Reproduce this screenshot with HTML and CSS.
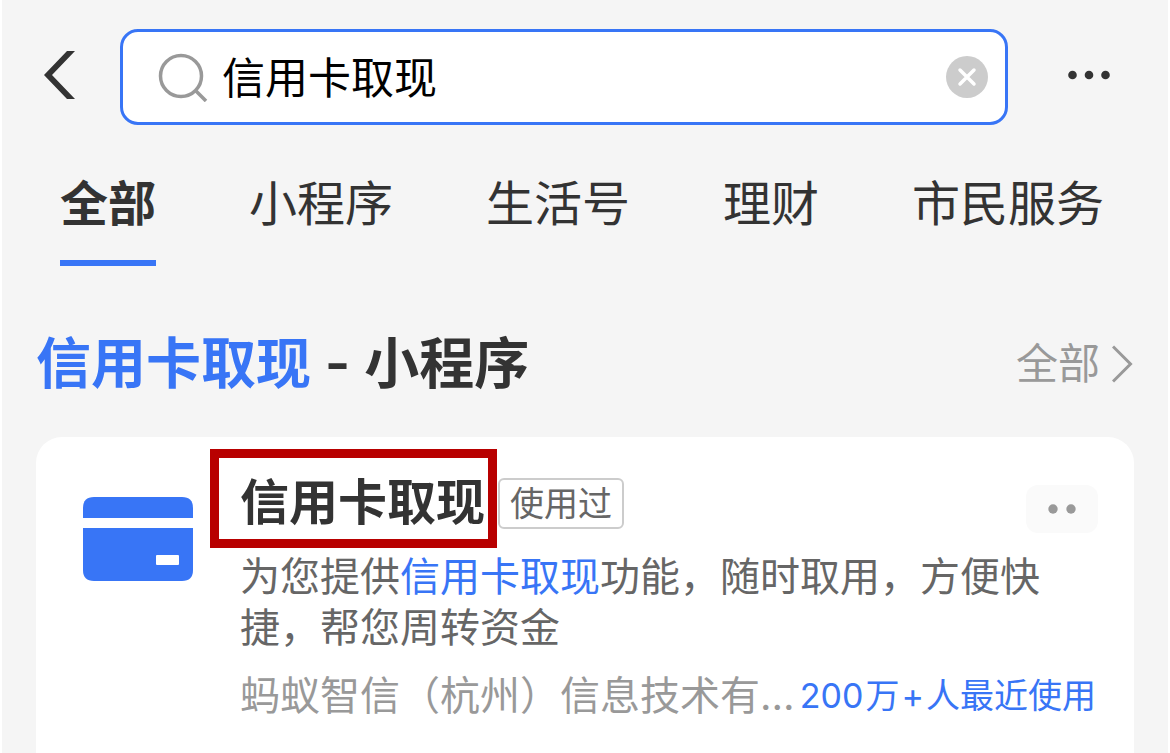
FILE: index.html
```
<!DOCTYPE html>
<html lang="zh-CN">
<head>
  <meta charset="UTF-8">
  <meta name="viewport" content="width=device-width, initial-scale=1.0">
  <title>信用卡取现 - 搜索</title>
  <link rel="stylesheet" href="styles.css">
</head>
<body>
  <!-- 顶部搜索栏 -->
  <header class="topbar">
    <button type="button" class="icon-btn nav-btn" aria-label="返回">
      <svg width="32" height="48" viewBox="0 0 32 48"><path d="M23 0h8L8 24l23 24h-8L0 24z" fill="#333"/></svg>
    </button>
    <form class="search-box">
      <svg width="50" height="50" viewBox="0 0 50 50" fill="none" stroke="#999" stroke-width="3.5"><circle cx="23" cy="24" r="20.5"/><path d="M37 38l11 11"/></svg>
      <input type="text" class="search-input" value="信用卡取现" aria-label="搜索">
      <button type="reset" class="icon-btn" aria-label="清除">
        <svg width="42" height="42" viewBox="0 0 42 42"><circle cx="21" cy="21" r="21" fill="#ccc"/><path d="M14 14l14 14M28 14L14 28" stroke="#fff" stroke-width="3.5" stroke-linecap="round"/></svg>
      </button>
    </form>
    <button type="button" class="icon-btn nav-btn" aria-label="更多">
      <svg width="42" height="10" viewBox="0 0 42 10" fill="#333"><circle cx="4.5" cy="5" r="4.3"/><circle cx="21" cy="5" r="4.3"/><circle cx="37.5" cy="5" r="4.3"/></svg>
    </button>
  </header>

  <!-- 分类标签 -->
  <nav class="tabs">
    <a href="#" class="tab active">全部</a>
    <a href="#" class="tab">小程序</a>
    <a href="#" class="tab">生活号</a>
    <a href="#" class="tab">理财</a>
    <a href="#" class="tab">市民服务</a>
  </nav>

  <main>
    <div class="section-header">
      <h1><span class="keyword">信用卡取现</span> - 小程序</h1>
      <a href="#" class="all-link">全部
        <svg width="22" height="38" viewBox="0 0 22 38" fill="none" stroke="#999" stroke-width="3"><path d="M1 1.5L18.5 19 1 36.5"/></svg>
      </a>
    </div>

    <!-- 搜索结果 -->
    <article class="card">
      <svg class="card-icon" width="110" height="84" viewBox="0 0 110 84">
        <path d="M0 21V11Q0 0 11 0h88q11 0 11 11v10z" fill="#3875f6"/>
        <path d="M0 31h110v42q0 11-11 11H11Q0 84 0 73z" fill="#3875f6"/>
        <rect x="73" y="58" width="23" height="10" rx="1" fill="#fff"/>
      </svg>
      <div class="card-body">
        <div class="card-head">
          <h2 class="card-title">信用卡取现</h2>
          <span class="badge">使用过</span>
          <button type="button" class="card-more" aria-label="更多操作">
            <svg width="28" height="10" viewBox="0 0 28 10" fill="#999"><circle cx="5" cy="5" r="4.7"/><circle cx="23" cy="5" r="4.7"/></svg>
          </button>
        </div>
        <p class="desc">为您提供<span class="keyword">信用卡取现</span>功能，随时取用，方便快捷，帮您周转资金</p>
        <div class="meta">
          <span class="company">蚂蚁智信（杭州）信息技术有限公司</span>
          <span class="usage"><span>200</span><span>万</span><span>+</span><span>人最近使用</span></span>
        </div>
      </div>
    </article>
  </main>
</body>
</html>
```
FILE: styles.css
```
* {
  box-sizing: border-box;
}
body {
  margin: 0;
  min-height: 100vh;
  background-color: #f5f5f5;
  border: solid #fff;
  border-width: 0 2px;
  font-family: Inter, "Noto Sans CJK SC", sans-serif;
  color: #333;
}
h1,
h2,
p {
  margin: 0;
}
a {
  color: inherit;
  text-decoration: none;
}
svg {
  display: block;
  flex-shrink: 0;
}
.icon-btn {
  padding: 0;
  border: none;
  background: none;
  cursor: pointer;
}
.nav-btn {
  padding-bottom: 4px;
}
.keyword {
  color: #3875f6;
}

/* 搜索栏 */
.topbar {
  display: flex;
  align-items: center;
  padding: 29px 58px 0 42px;
}
.search-box {
  flex: 1;
  display: flex;
  align-items: center;
  height: 96px;
  margin: 0 60px 0 44px;
  padding: 0 17px 0 35px;
  background-color: #fff;
  border: 3px solid #3875f6;
  border-radius: 18px;
}
.search-input {
  flex: 1;
  min-width: 0;
  height: 68px;
  padding: 0 14px 4px;
  border: none;
  outline: none;
  background: none;
  font-family: inherit;
  font-size: 43px;
  color: #000;
}

/* 标签 */
.tabs {
  display: flex;
  justify-content: space-between;
  padding: 49px 64px 0 58px;
}
.tab {
  padding-bottom: 26px;
  border-bottom: 6px solid transparent;
  font-size: 48px;
  line-height: 60px;
}
.tab.active {
  border-bottom-color: #3875f6;
  font-weight: 600;
}

/* 标题 */
.section-header {
  display: flex;
  justify-content: space-between;
  align-items: center;
  padding: 60px 34px 36px;
}
.section-header h1 {
  font-size: 55px;
  font-weight: 600;
  line-height: 75px;
}
.all-link {
  display: flex;
  align-items: center;
  gap: 12px;
  font-size: 42px;
  line-height: 60px;
  color: #999;
}

/* 结果卡片 */
.card {
  display: flex;
  align-items: flex-start;
  gap: 47px;
  min-height: 340px;
  margin: 0 34px;
  padding: 30px 36px 30px 47px;
  background-color: #fff;
  border-radius: 26px 26px 0 0;
}
.card-icon {
  margin-top: 30px;
}
.card-body {
  flex: 1;
  min-width: 0;
}
.card-head {
  display: flex;
  align-items: center;
  height: 72px;
}
.card-title {
  position: relative;
  font-size: 49px;
  font-weight: 600;
  line-height: 72px;
}
/* 红色标注框 */
.card-title::after {
  content: "";
  position: absolute;
  inset: -18px -12px -9px -30px;
  border: 9px solid #b80000;
}
.badge {
  margin-left: 13px;
  padding: 0 10px;
  border: 2px solid #ccc;
  border-radius: 6px;
  font-size: 34px;
  line-height: 47px;
  color: #666;
}
.card-more {
  display: flex;
  justify-content: center;
  align-items: center;
  align-self: flex-end;
  width: 72px;
  height: 48px;
  margin-bottom: 6px;
  margin-left: auto;
  padding: 0;
  border: none;
  border-radius: 12px;
  background-color: #fafafa;
  cursor: pointer;
}
.desc {
  margin-top: 12px;
  padding-right: 40px;
  font-size: 40px;
  line-height: 51px;
  color: #666;
}
.meta {
  display: flex;
  align-items: center;
  margin-top: 13px;
  padding-right: 2px;
  line-height: 60px;
  white-space: nowrap;
}
.company {
  flex: 1;
  min-width: 0;
  overflow: hidden;
  text-overflow: ellipsis;
  font-size: 40px;
  color: #999;
}
.usage {
  display: flex;
  gap: 2px;
  font-size: 34px;
  color: #3875f6;
}
```
